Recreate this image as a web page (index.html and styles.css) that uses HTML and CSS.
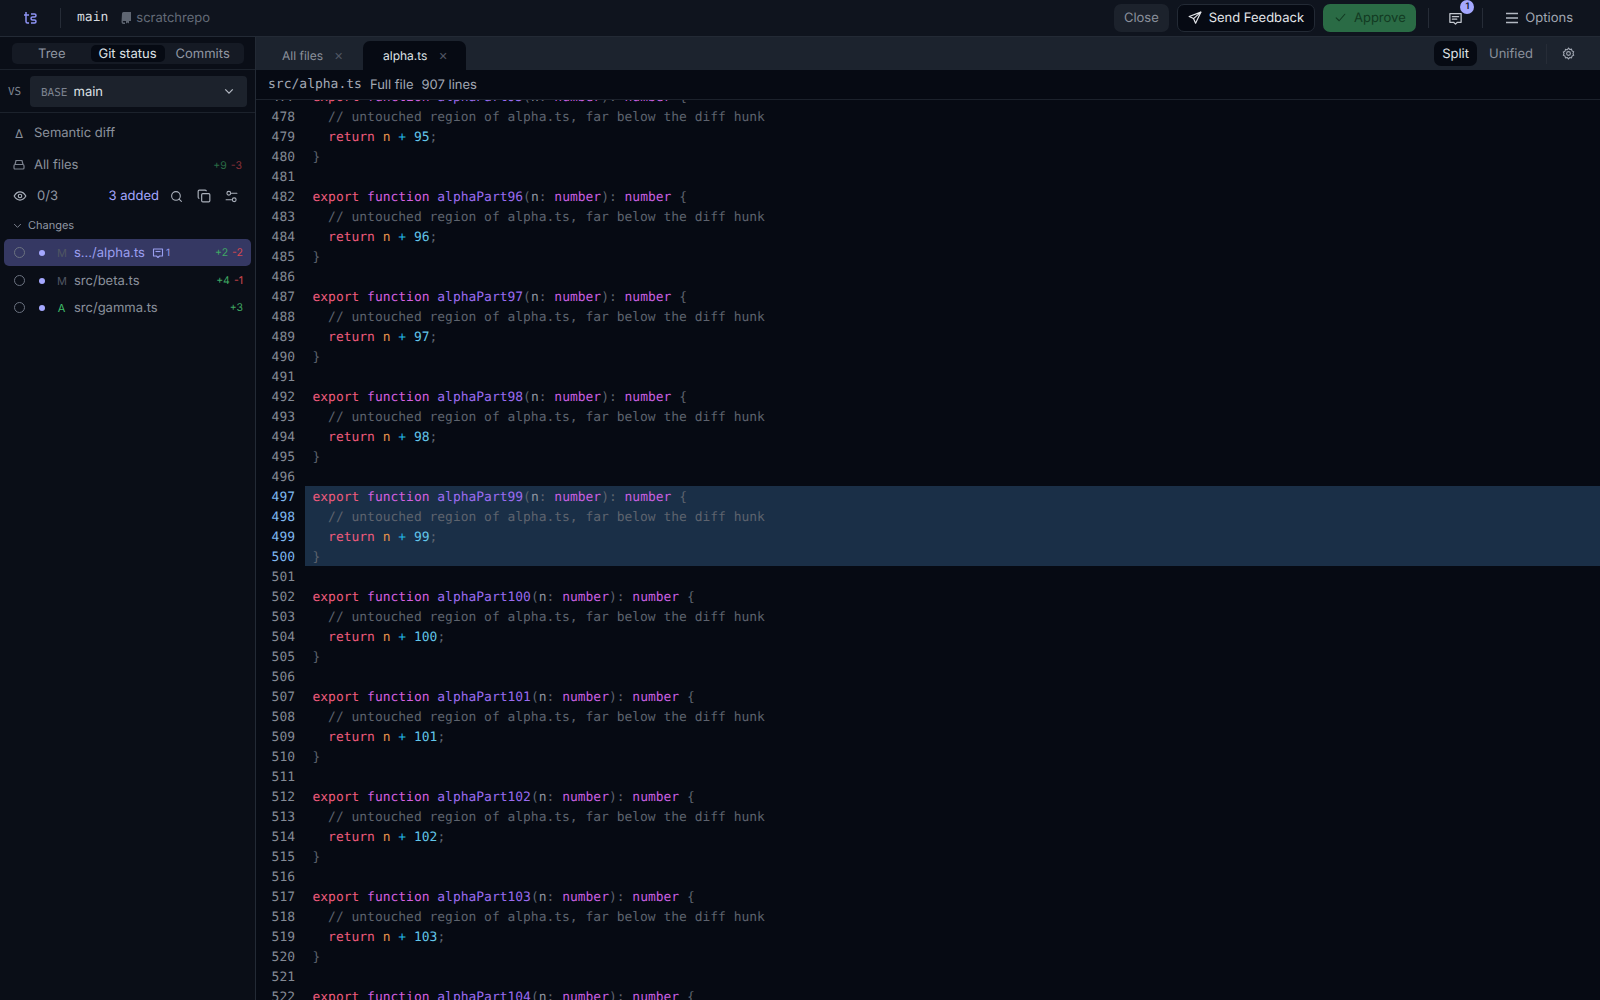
FILE: index.html
```html
<!DOCTYPE html>
<html lang="en">

<head>
    <meta charset="UTF-8">
    <meta name="viewport" content="width=device-width, initial-scale=1.0">
    <title>scratchrepo</title>
    <link rel="stylesheet" href="styles.css">
</head>

<body>
    <header class="topbar">
        <svg class="logo" width="14" height="14" viewBox="0 0 14 14" fill="none" stroke="#8f94f5" stroke-width="1.5">
            <path d="M3 1v9.500a1.500 1.500 0 0 0 1.500 1.500H6M1 4h5" />
            <path d="M8 3h3.500a1.500 1.500 0 0 1 0 3H9.500a1.500 1.500 0 0 0 0 3h2a1.500 1.500 0 0 1 0 3H8" />
        </svg>
        <span class="divider logo-divider"></span>
        <span class="branch">main</span>
        <svg class="repo-icon" width="12" height="12" viewBox="0 0 12 12" fill="#5f6672">
            <path d="M2 1.500A1.500 1.500 0 0 1 3.500 0H11v9H9v2.500L7.500 10.500 6 11.500V9H3.500a.6.6 0 0 0 0 1.500H5V12H3.500A2 2 0 0 1 1.500 10z" />
        </svg>
        <span class="repo">scratchrepo</span>
        <div class="top-actions">
            <button class="btn btn-close">Close</button>
            <button class="btn btn-feedback">
                <svg width="14" height="14" viewBox="0 0 24 24" fill="none" stroke="currentColor" stroke-width="2" stroke-linejoin="round" stroke-linecap="round">
                    <path d="M22 2 2 9.500l7.500 3.500L13 21z" />
                    <path d="M22 2 9.500 13" />
                </svg>
                Send Feedback
            </button>
            <button class="btn btn-approve">
                <svg width="13" height="13" viewBox="0 0 24 24" fill="none" stroke="currentColor" stroke-width="2" stroke-linecap="round" stroke-linejoin="round">
                    <path d="M4 12.500 9.500 18 20 6" />
                </svg>
                Approve
            </button>
            <span class="divider approve-divider"></span>
            <div class="comments">
                <svg width="15" height="15" viewBox="0 0 24 24" fill="none" stroke="#c3c7cf" stroke-width="2" stroke-linejoin="round" stroke-linecap="round">
                    <path d="M3 4h18v14h-6l-3 3-3-3H3z" />
                    <path d="M7 9h10M7 13h7" />
                </svg>
                <span class="badge">1</span>
            </div>
            <span class="divider options-divider"></span>
            <div class="options">
                <svg width="14" height="14" viewBox="0 0 14 14" stroke="#b3b8c2" stroke-width="1.500">
                    <path d="M1 2.500h12M1 7h12M1 11.500h12" />
                </svg>
                Options
            </div>
        </div>
    </header>

    <div class="layout">
        <aside class="sidebar">
            <div class="segment-wrap">
                <div class="segment">
                    <span class="segment-item seg-tree">Tree</span>
                    <span class="segment-item active">Git status</span>
                    <span class="segment-item">Commits</span>
                </div>
            </div>
            <div class="base-row">
                <span class="vs">VS</span>
                <div class="base-select">
                    <span class="base-label">BASE</span>
                    <span class="base-name">main</span>
                    <svg class="chevron" width="10" height="10" viewBox="0 0 12 12" fill="none" stroke="#b3b8c2" stroke-width="1.500">
                        <path d="M1.500 4 6 8.500 10.500 4" />
                    </svg>
                </div>
            </div>
            <div class="side-link semantic">
                <span class="delta">&#916;</span>
                Semantic diff
            </div>
            <div class="side-link allfiles">
                <svg width="12" height="12" viewBox="0 0 12 12" fill="none" stroke="#7d838f" stroke-width="1.200">
                    <path d="M3 1.500h6l1 4H2zM1 7a1.500 1.500 0 0 1 1-1.500h8A1.500 1.500 0 0 1 11 7v2a1 1 0 0 1-1 1H2a1 1 0 0 1-1-1z" />
                </svg>
                <span class="grow">All files</span>
                <span class="count add dim">+9</span>
                <span class="count del dim">-3</span>
            </div>
            <div class="status-row">
                <svg class="eye" width="14" height="14" viewBox="0 0 24 24" fill="none" stroke="#aab0bb" stroke-width="2">
                    <path d="M2 12s4-7 10-7 10 7 10 7-4 7-10 7-10-7-10-7z" />
                    <circle cx="12" cy="12" r="3" />
                </svg>
                <span class="progress">0/3</span>
                <span class="added">3 added</span>
                <svg class="tool" width="13" height="13" viewBox="0 0 24 24" fill="none" stroke="#aab0bb" stroke-width="2" stroke-linecap="round">
                    <circle cx="11" cy="11" r="8" />
                    <path d="m21 21-4.300-4.300" />
                </svg>
                <svg class="tool" width="14" height="14" viewBox="0 0 24 24" fill="none" stroke="#aab0bb" stroke-width="2" stroke-linejoin="round">
                    <rect x="8" y="8" width="14" height="14" rx="2" />
                    <path d="M4 16a2 2 0 0 1-2-2V4a2 2 0 0 1 2-2h10a2 2 0 0 1 2 2" />
                </svg>
                <svg class="tool" width="13" height="13" viewBox="0 0 24 24" fill="none" stroke="#aab0bb" stroke-width="2" stroke-linecap="round">
                    <path d="M12 6h10M2 18h10" />
                    <circle cx="7" cy="6" r="3.500" />
                    <circle cx="17" cy="18" r="3.500" />
                </svg>
            </div>
            <div class="changes-title">
                <svg width="9" height="9" viewBox="0 0 12 12" fill="none" stroke="#7d838f" stroke-width="1.300">
                    <path d="M1.500 4 6 8.500 10.500 4" />
                </svg>
                Changes
            </div>
            <ul class="file-list">
                <li class="file selected">
                    <span class="circle"></span>
                    <span class="dot"></span>
                    <span class="letter">M</span>
                    <span class="file-name">s.../alpha.ts</span>
                    <svg class="note" width="12" height="12" viewBox="0 0 24 24" fill="none" stroke="#9b9ff0" stroke-width="2.200" stroke-linejoin="round">
                        <path d="M3 4h18v14h-6l-3 3-3-3H3z" />
                        <path d="M7 9h10" />
                    </svg>
                    <span class="note-count">1</span>
                    <span class="counts">
                        <span class="count add">+2</span>
                        <span class="count del">-2</span>
                    </span>
                </li>
                <li class="file">
                    <span class="circle"></span>
                    <span class="dot"></span>
                    <span class="letter">M</span>
                    <span class="file-name">src/beta.ts</span>
                    <span class="counts">
                        <span class="count add">+4</span>
                        <span class="count del">-1</span>
                    </span>
                </li>
                <li class="file">
                    <span class="circle"></span>
                    <span class="dot"></span>
                    <span class="letter letter-added">A</span>
                    <span class="file-name">src/gamma.ts</span>
                    <span class="counts">
                        <span class="count add">+3</span>
                    </span>
                </li>
            </ul>
        </aside>

        <main class="content">
            <div class="tabbar">
                <div class="tab">All files <span class="tab-x">&#215;</span></div>
                <div class="tab active">alpha.ts <span class="tab-x">&#215;</span></div>
                <div class="view-switch">
                    <span class="view-item active">Split</span>
                    <span class="view-item">Unified</span>
                    <span class="divider view-divider"></span>
                    <svg width="13" height="13" viewBox="0 0 24 24" fill="none" stroke="#a2a8b3" stroke-width="2">
                        <path d="M12 2l2.200 2.500 3.300-.5 1 3.200 3 1.500-1.200 3.300 1.200 3.300-3 1.500-1 3.200-3.300-.5L12 22l-2.200-2.500-3.300.5-1-3.200-3-1.500 1.200-3.300L2.500 9.200l3-1.500 1-3.200 3.300.5z" />
                        <circle cx="12" cy="12" r="3.500" />
                    </svg>
                </div>
            </div>
            <div class="file-header">
                <span class="file-path">src/alpha.ts</span>
                <span>Full file</span>
                <span>907 lines</span>
            </div>
            <div class="code-scroll">
                <div class="code" id="code"></div>
            </div>
        </main>
    </div>

    <script src="script.js"></script>
</body>

</html>
```

FILE: styles.css
```css
* {
    box-sizing: border-box;
    margin: 0;
    padding: 0;
}

html,
body {
    height: 100%;
    overflow: hidden;
}

body {
    display: flex;
    flex-direction: column;
    font-family: Inter, sans-serif;
    font-size: 13px;
    color: #c9cdd4;
    background: #060a13;
    text-rendering: geometricPrecision;
}

button {
    font: inherit;
    border: 0;
    text-rendering: inherit;
}

.divider {
    width: 1px;
    height: 20px;
    background: #262c37;
}

.topbar {
    display: flex;
    align-items: center;
    flex: none;
    height: 37px;
    padding-left: 23px;
    background: #0f141e;
    border-bottom: 1px solid #232a35;
}

.logo-divider {
    margin: 0 16px 0 23px;
}

.branch {
    margin-bottom: 1px;
    font-family: "DejaVu Sans Mono", monospace;
    font-size: 13px;
    color: #d6d9de;
}

.repo-icon {
    margin: 0 4px 0 12px;
}

.repo {
    margin-bottom: 1px;
    color: #646b78;
}

.top-actions {
    display: flex;
    align-items: center;
    margin-left: auto;
}

.btn {
    display: flex;
    align-items: center;
    gap: 7px;
    height: 28px;
    padding-bottom: 1px;
    border-radius: 7px;
}

.btn-close {
    width: 55px;
    justify-content: center;
    padding-right: 1px;
    background: #1c222c;
    color: #8b919c;
}

.btn-feedback {
    width: 138px;
    justify-content: center;
    margin-left: 8px;
    padding-right: 1px;
    background: #060a13;
    border: 1px solid #232a35;
    color: #e4e6ea;
}

.btn-approve {
    width: 93px;
    justify-content: center;
    margin-left: 8px;
    background: #2a6b45;
    color: #123a22;
}

.approve-divider {
    margin-left: 12px;
}

.comments {
    position: relative;
    display: flex;
    margin-left: 19px;
}

.badge {
    position: absolute;
    top: -11px;
    left: 12px;
    width: 14px;
    height: 14px;
    border-radius: 50%;
    background: #a5a8ff;
    color: #10131f;
    font-size: 9px;
    font-weight: 600;
    line-height: 14px;
    text-align: center;
}

.options-divider {
    margin-left: 19px;
}

.options {
    display: flex;
    align-items: center;
    gap: 6px;
    margin: 0 27px 1px 22px;
    color: #a2a8b3;
}

.layout {
    display: flex;
    flex: 1;
    min-height: 0;
}

.sidebar {
    flex: none;
    width: 256px;
    background: #0a0e17;
    border-right: 1px solid #232a35;
}

.segment-wrap {
    height: 33px;
    padding: 6px 12px 0;
    border-bottom: 1px solid #1c222c;
}

.segment {
    display: flex;
    align-items: center;
    width: 232px;
    height: 21px;
    padding: 2px 0;
    background: #151a24;
    border-radius: 5px;
}

.segment-item {
    padding: 1px 8px 0;
    color: #9197a2;
    line-height: 16px;
    border-radius: 5px;
}

.seg-tree {
    margin: 0 17px 0 18px;
}

.segment-item.active {
    margin-right: 3px;
    background: #060a13;
    color: #dfe2e6;
}

.base-row {
    display: flex;
    align-items: center;
    height: 43px;
    padding: 0 8px;
    border-bottom: 1px solid #1c222c;
}

.vs {
    width: 22px;
    font-family: "DejaVu Sans Mono", monospace;
    font-size: 11px;
    color: #7d838f;
}

.base-select {
    display: flex;
    align-items: center;
    flex: 1;
    height: 31px;
    padding: 0 11px;
    background: #1c222c;
    border-radius: 4px;
}

.base-label {
    margin: 2px 6px 0 0;
    font-family: "DejaVu Sans Mono", monospace;
    font-size: 11px;
    color: #7d838f;
}

.base-name {
    margin-top: 2px;
    color: #dfe2e6;
}

.chevron {
    margin-left: auto;
    margin-right: 2px;
}

.side-link {
    display: flex;
    align-items: center;
    gap: 9px;
    height: 32px;
    padding: 2px 13px 0;
    color: #8b919c;
}

.semantic {
    margin-top: 3px;
}

.delta {
    width: 12px;
    font-size: 12px;
    text-align: center;
}

.grow {
    flex: 1;
}

.allfiles .count + .count {
    margin-left: -5px;
}

.count {
    font-size: 10.5px;
}

.add {
    color: #3fa863;
}

.del {
    color: #d9484f;
}

.dim {
    opacity: 0.6;
}

.status-row {
    display: flex;
    align-items: center;
    height: 30px;
    padding: 2px 13px 0;
    color: #9197a2;
}

.eye {
    margin-right: 10px;
}

.added {
    margin-left: auto;
    color: #a5a8ff;
}

.tool {
    margin-left: 14px;
}

.added + .tool {
    margin-left: 11px;
}

.tool:last-child {
    margin-right: 4px;
}

.changes-title {
    display: flex;
    align-items: center;
    gap: 6px;
    height: 29px;
    padding: 1px 0 0 13px;
    font-size: 11px;
    color: #9197a2;
}

.file-list {
    list-style: none;
    padding: 0 4px;
}

.file {
    display: flex;
    align-items: center;
    height: 27px;
    padding: 0 8px 0 10px;
    border-radius: 5px;
    color: #8b919c;
}

.file.selected {
    margin-bottom: 1px;
    background: #353863;
    color: #9b9ff0;
}

.circle {
    width: 11px;
    height: 11px;
    border: 1px solid #6b7280;
    border-radius: 50%;
}

.dot {
    width: 6px;
    height: 6px;
    margin-left: 14px;
    background: #a5a8ff;
    border-radius: 50%;
}

.letter {
    width: 9px;
    margin: 0 8px 0 12px;
    font-size: 11px;
    color: #4f5562;
    text-align: center;
}

.letter-added {
    color: #3fbf6b;
}

.note {
    margin-left: 7px;
}

.note-count {
    margin-left: 2px;
    font-size: 10px;
}

.counts {
    display: flex;
    gap: 4px;
    margin-left: auto;
}

.content {
    display: flex;
    flex: 1;
    flex-direction: column;
    min-width: 0;
}

.tabbar {
    display: flex;
    align-items: flex-end;
    flex: none;
    height: 33px;
    padding-left: 4px;
    background: #1c232e;
}

.tab {
    display: flex;
    align-items: center;
    gap: 11px;
    width: 103px;
    height: 29px;
    padding-left: 22px;
    font-size: 12px;
    color: #8b919c;
    border-radius: 7px 7px 0 0;
}

.tab-x {
    font-size: 14px;
    color: #4f5562;
}

.tab.active {
    background: #060a13;
    color: #dfe2e6;
    padding-left: 20px;
}

.view-switch {
    display: flex;
    align-items: center;
    align-self: center;
    margin-left: auto;
    padding-right: 25px;
}

.view-item {
    padding-top: 2px;
    padding-left: 8px;
    padding-right: 8px;
    line-height: 23px;
    color: #8b919c;
    border-radius: 7px;
}

.view-item.active {
    margin-right: 4px;
    background: #060a13;
    color: #dfe2e6;
}

.view-divider {
    margin: 0 15px 0 5px;
}

.file-header {
    display: flex;
    align-items: center;
    gap: 8px;
    flex: none;
    height: 30px;
    padding-left: 12px;
    color: #a2a8b3;
    border-bottom: 1px solid #1c222c;
}

.file-path {
    font-family: "DejaVu Sans Mono", monospace;
    font-size: 13px;
}

.code-scroll {
    flex: 1;
    min-height: 0;
    overflow: hidden;
}

.code {
    margin-top: -14px;
    font-family: "DejaVu Sans Mono", monospace;
    font-size: 12.96px;
    line-height: 24px;
    white-space: pre;
}

.row {
    display: flex;
    height: 20px;
}

.num {
    flex: none;
    width: 49px;
    padding-right: 10px;
    text-align: right;
    color: #848a95;
}

.row.marked .num {
    color: #7fb8f0;
}

.line {
    flex: 1;
    padding-left: 7.5px;
    color: #5d636e;
}

.row.marked .line {
    background: #1a2f47;
}

.kw {
    color: #ee5a7c;
}

.fn {
    color: #d35fe0;
}

.name {
    color: #9a6cf0;
}

.param {
    color: #8f95a0;
}

.type {
    color: #c95fe0;
}

.var {
    color: #e8924a;
}

.op {
    color: #22b5e6;
}

.lit {
    color: #62c6ea;
}

.cmt {
    color: #5d636e;
}
```

FILE: script.js
```js
"use strict";
const code = document.querySelector("#code");
const first = 477;
const last = 522;

// every function in the file takes up 5 lines, the 95th starts at 477
function lineHtml(num) {
    const part = 95 + Math.floor((num - 477) / 5);
    switch ((num - 477) % 5) {
        case 0:
            return `<span class="kw">export</span> <span class="fn">function</span> <span class="name">alphaPart${part}</span>(<span class="param">n</span>: <span class="type">number</span>): <span class="type">number</span> {`;
        case 1:
            return `  <span class="cmt">// untouched region of alpha.ts, far below the diff hunk</span>`;
        case 2:
            return `  <span class="kw">return</span> <span class="var">n</span> <span class="op">+</span> <span class="lit">${part}</span>;`;
        case 3:
            return "}";
        default:
            return "";
    }
}

for (let num = first; num <= last; num++) {
    const row = document.createElement("div");
    row.className = num >= 497 && num <= 500 ? "row marked" : "row";
    row.innerHTML = `<span class="num">${num}</span><span class="line">${lineHtml(num)}</span>`;
    code.append(row);
}
```
